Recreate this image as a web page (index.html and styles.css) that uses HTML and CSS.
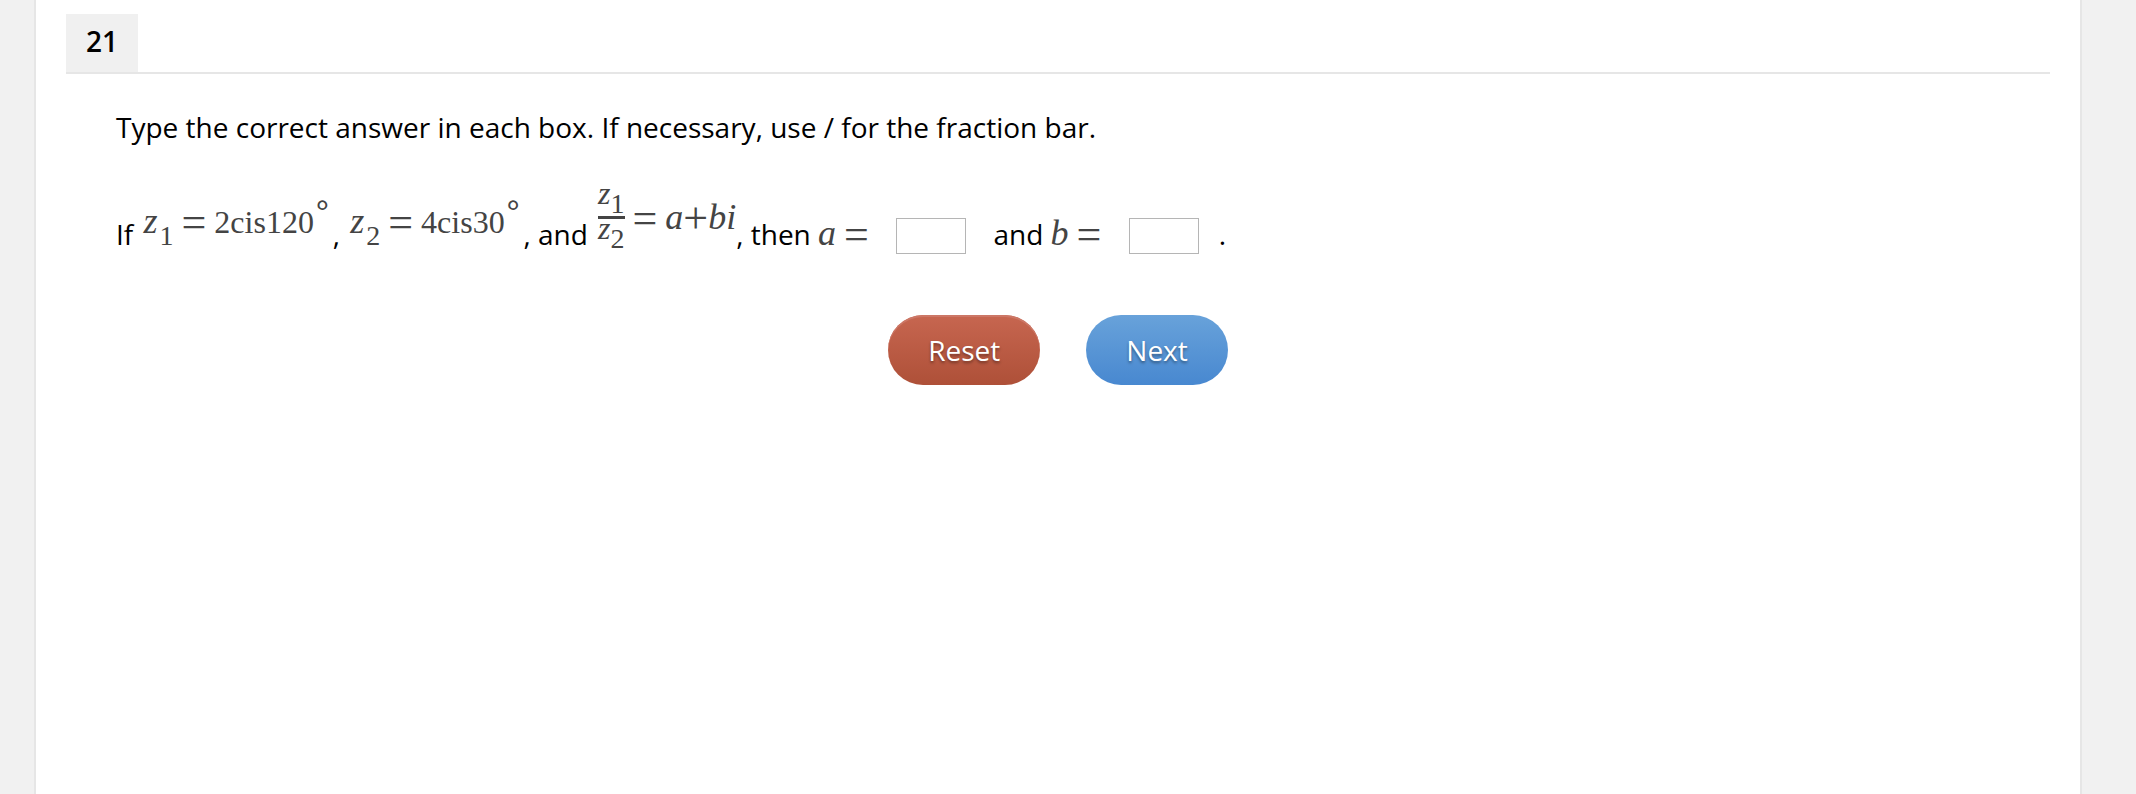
FILE: index.html
```html
<!DOCTYPE html>
<html lang="en">
<head>
    <meta charset="UTF-8">
    <meta name="viewport" content="width=device-width, initial-scale=1.0">
    <title>Question 21</title>
    <link rel="stylesheet" href="styles.css">
</head>
<body>
    <main class="page">
        <header class="question-header">
            <span class="question-number">21</span>
        </header>
        <form class="question-form" action="">
            <p class="instructions">Type the correct answer in each box. If necessary, use / for the fraction bar.</p>
            <p class="problem">
                If
                <span class="math raised"><i>z</i><span class="sub">1</span><span class="op">=</span><span>2cis120</span><span class="degree">°</span></span>,
                <span class="math raised"><i>z</i><span class="sub">2</span><span class="op">=</span><span>4cis30</span><span class="degree">°</span></span>, and
                <span class="math centered"><span class="fraction"><span class="term top"><i>z</i><span class="sub">1</span></span><span class="term bottom"><i>z</i><span class="sub">2</span></span></span><span class="op">=</span><i>a</i><span class="plus">+</span><i>bi</i></span>,
                <label for="answer-a">then <span class="math"><i>a</i><span class="op">=</span></span></label>
                <input type="text" id="answer-a" class="answer">
                <label for="answer-b">and <span class="math"><i>b</i><span class="op">=</span></span></label>
                <input type="text" id="answer-b" class="answer">.
            </p>
            <div class="buttons">
                <button type="reset" class="button reset">Reset</button>
                <button type="submit" class="button next">Next</button>
            </div>
        </form>
    </main>
</body>
</html>
```
FILE: styles.css
```css
* {
    box-sizing: border-box;
}

body {
    margin: 0;
    background: #f1f1f1;
    color: #000;
    font-family: "Open Sans", sans-serif;
    font-size: 28px;
    line-height: 38px;
}

.page {
    min-height: 100vh;
    margin: 0 54px 0 34px;
    padding: 14px 30px;
    border: solid #e6e6e6;
    border-width: 0 2px;
    background: #fff;
}

.question-header {
    display: flex;
    border-bottom: 2px solid #e6e6e6;
}

.question-number {
    padding: 8px 20px 12px;
    background: #f0f0f0;
    font-weight: 600;
}

.question-form {
    padding: 34px 0 0;
}

.instructions,
.problem {
    margin: 0;
    padding: 0 50px;
}

.problem {
    margin-top: 40px;
}

/* formulas */
.math {
    display: inline-block;
    color: #444;
    font-family: "Liberation Serif", serif;
    font-size: 32px;
    line-height: 32px;
    white-space: nowrap;
}

.math i {
    font-size: 36px;
}

.raised {
    margin: 0 4px 0 3px;
    vertical-align: 12px;
}

.centered {
    margin-left: 3px;
    vertical-align: 16px;
}

.sub {
    margin-left: 2px;
    font-size: 28px;
    vertical-align: -12px;
}

.degree {
    margin-left: 2px;
    font-weight: bold;
    vertical-align: 11px;
}

.op,
.plus {
    font-size: 44px;
    vertical-align: -4px;
}

.op {
    margin: 0 8px;
}

label .op {
    margin-right: 0;
}

/* z1 over z2, the bar is the border between them */
.fraction {
    display: inline-block;
    line-height: 14px;
    vertical-align: -10px;
}

.term {
    display: block;
}

.top {
    height: 33px;
    border-bottom: 3px solid #444;
}

.bottom {
    height: 16px;
    padding-top: 2px;
}

.fraction i {
    font-size: 32px;
}

.fraction .sub {
    margin-left: 0;
    vertical-align: -9px;
}

.answer {
    width: 70px;
    height: 36px;
    margin: 0 20px;
    padding: 0 6px;
    border: 1px solid #b5b5b5;
    background: #fff;
    font: inherit;
    font-size: 24px;
}

.buttons {
    display: flex;
    justify-content: center;
    gap: 46px;
    margin-top: 61px;
}

.button {
    height: 70px;
    padding: 0 40px;
    border: 0;
    border-radius: 35px;
    color: #fff;
    font: inherit;
    text-shadow: 0 2px 3px rgba(0, 0, 0, 0.4);
    cursor: pointer;
}

.reset {
    background: linear-gradient(#c76650, #ae5038);
    box-shadow: inset 0 2px 0 #cc7766;
}

.next {
    background: linear-gradient(#68a2da, #4888d0);
}
```
